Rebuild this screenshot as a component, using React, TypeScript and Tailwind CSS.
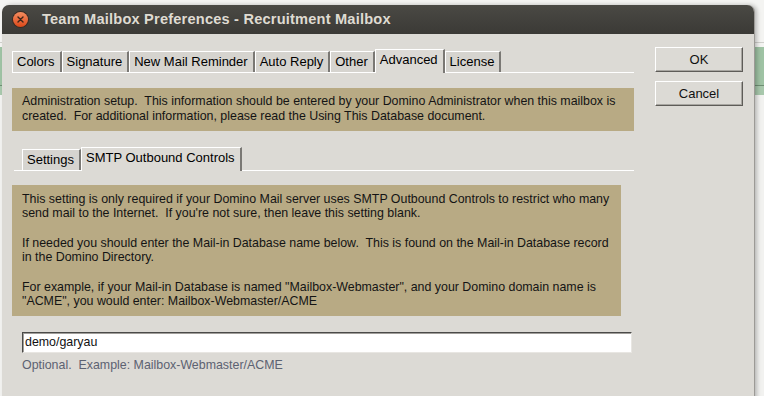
import type { ReactNode } from "react";

const tabs = ["Colors", "Signature", "New Mail Reminder", "Auto Reply", "Other", "Advanced", "License"];

function Tab({ label, active }: { label: string; active?: boolean }) {
	return (
		<div
			className={`flex items-center border-l border-t border-l-white border-t-white border-r-2 border-r-[#7a7874] pl-[4px] pr-[5px] text-[13px] ${
				active ? "h-[24px] -mb-px bg-[#dcdad5] pb-[3px]" : "h-[21px] bg-[#d6d4cf]"
			}`}
		>
			<span className="whitespace-pre">{label}</span>
		</div>
	);
}

function TanBox({ children, className }: { children: ReactNode; className?: string }) {
	return <div className={`bg-[#b8aa84] text-[#141414] ${className ?? ""}`}>{children}</div>;
}

function Button({ label }: { label: string }) {
	return (
		<button
			type="button"
			className="flex h-[25px] w-[88px] items-center justify-center border border-b-[#5e5c58] border-r-[#5e5c58] border-l-white border-t-white bg-[#dcdad5] text-[13px] text-[#111] shadow-[inset_-1px_-1px_0_#a8a6a1]"
		>
			{label}
		</button>
	);
}

export default function App() {
	return (
		<div className="relative h-[396px] w-[764px] overflow-hidden bg-[#f4f4f2] font-['Liberation_Sans',Arial,sans-serif] text-[12.4px]">
			{/* background window peeking out on the right */}
			<div className="flex h-full flex-col pt-[42px]">
				<div className="h-px bg-[#d0d0cc]" />
				<div className="mt-[4px] h-[38px] bg-[#9fc3a4]" />
				<div className="h-px bg-[#6f8f73]" />
				<div className="h-[9px] bg-[#a8c8ac]" />
				<div className="flex-1 bg-[#f2f2f0]" />
			</div>

			{/* dialog */}
			<div className="absolute left-[2px] top-[5px] flex h-[400px] w-[752px] flex-col overflow-hidden rounded-t-[7px] bg-[#dcdad5] shadow-[1px_0_0_#9c9a96,3px_0_4px_rgba(0,0,0,0.25)]">
				<div className="flex h-[29px] shrink-0 items-center bg-gradient-to-b from-[#4a4944] to-[#3b3a36] pl-[11px]">
					<div className="flex h-[15px] w-[15px] items-center justify-center rounded-full bg-gradient-to-b from-[#f48c5e] to-[#dc4714] shadow-[0_0_0_1px_#3a2a22]">
						<svg width="7" height="7" viewBox="0 0 7 7">
							<path d="M1 1 L6 6 M6 1 L1 6" stroke="#3b2418" strokeWidth="1.4" strokeLinecap="round" />
						</svg>
					</div>
					<span className="ml-[14px] whitespace-pre text-[14.6px] font-bold tracking-[0.2px] text-[#dfdbd2]">
						Team Mailbox Preferences - Recruitment Mailbox
					</span>
				</div>

				<div className="flex flex-1">
					<div className="w-[632px] pl-[10px]">
						{/* tab row */}
						<div className="mt-[15px] flex h-[24px] items-end border-b border-white">
							{tabs.map((t) => (
								<Tab key={t} label={t} active={t === "Advanced"} />
							))}
						</div>

						<TanBox className="mt-[15px] w-[622px] px-[10px] pb-[7px] pt-[6px] leading-[15px]">
							<p className="whitespace-pre">
								Administration setup.  This information should be entered by your Domino Administrator when this mailbox is
							</p>
							<p className="whitespace-pre">created.  For additional information, please read the Using This Database document.</p>
						</TanBox>

						{/* sub tabs */}
						<div className="ml-[2px] mt-[16px] flex h-[24px] items-end border-b border-white pl-[8px]">
							<Tab label="Settings" />
							<Tab label="SMTP Outbound Controls" active />
						</div>

						<TanBox className="mt-[14px] w-[609px] px-[10px] pb-[8px] pt-[7px] leading-[14px]">
							<p className="whitespace-pre">
								This setting is only required if your Domino Mail server uses SMTP Outbound Controls to restrict who many
							</p>
							<p className="whitespace-pre">send mail to the Internet.  If you're not sure, then leave this setting blank.</p>
							<p className="mt-[16px] whitespace-pre">
								If needed you should enter the Mail-in Database name below.  This is found on the Mail-in Database record
							</p>
							<p className="whitespace-pre">in the Domino Directory.</p>
							<p className="mt-[16px] whitespace-pre">
								For example, if your Mail-in Database is named "Mailbox-Webmaster", and your Domino domain name is
							</p>
							<p className="whitespace-pre">"ACME", you would enter: Mailbox-Webmaster/ACME</p>
						</TanBox>

						<div className="ml-[10px] mt-[16px] flex h-[21px] w-[610px] items-center border border-b-[#e8e6e2] border-l-[#4a4a48] border-r-[#e8e6e2] border-t-[#4a4a48] bg-white pl-[2px] text-[#111] shadow-[inset_1px_1px_0_#a09e9a]">
							demo/garyau
						</div>
						<p className="ml-[10px] mt-[3px] whitespace-pre text-[#5c6272]">Optional.  Example: Mailbox-Webmaster/ACME</p>
					</div>

					<div className="ml-[21px] flex flex-col gap-[9px] pt-[13px]">
						<Button label="OK" />
						<Button label="Cancel" />
					</div>
				</div>
			</div>
		</div>
	);
}
